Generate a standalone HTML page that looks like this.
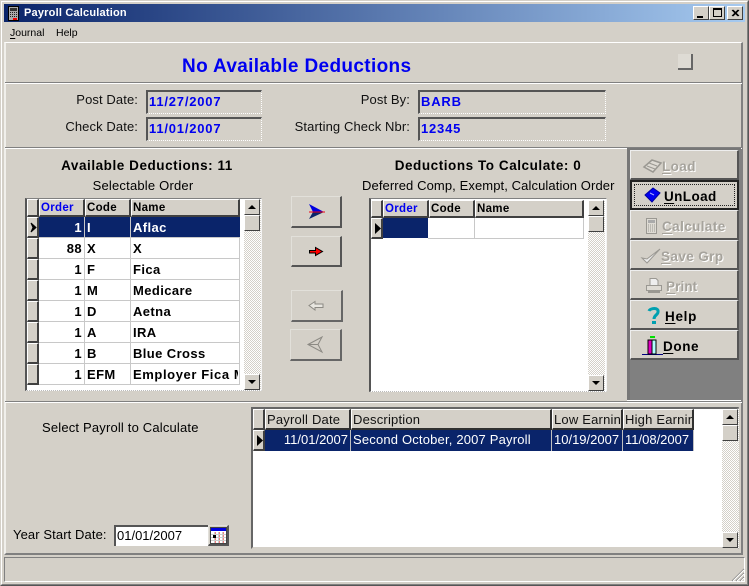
<!DOCTYPE html>
<html><head><meta charset="utf-8"><style>
html,body{margin:0;padding:0;width:749px;height:586px;overflow:hidden;background:#d4d0c8}
*{box-sizing:border-box}
body{font-family:"Liberation Sans",sans-serif;font-size:13px;color:#000;position:relative}
.a,.t{position:absolute}
.t{white-space:nowrap;line-height:14px}
.hl{position:absolute;height:2px;border-top:1px solid #808080;border-bottom:1px solid #fff}
.fld{position:absolute;border-top:2px solid #555;border-left:2px solid #555;border-right:1px dotted #fff;border-bottom:1px dotted #fff;color:#0000f0;font-weight:bold;font-size:13px;letter-spacing:.8px;padding:3px 0 0 1px;line-height:14px}
.lab{position:absolute;text-align:right;white-space:nowrap;line-height:14px;color:#111;letter-spacing:.1px}
.cap{position:absolute;text-align:center;white-space:nowrap;line-height:14px}
.c{position:absolute;overflow:hidden;white-space:nowrap;font-weight:bold;font-size:13px;letter-spacing:.4px;line-height:21px;padding:0 2px}
.h{position:absolute;overflow:hidden;white-space:nowrap;background:#d4d0c8;border-top:1px solid #fff;border-left:1px solid #fff;border-right:2px solid #404040;border-bottom:2px solid #404040;font-weight:bold;font-size:11.5px;padding:2px 0 0 1px;letter-spacing:.3px;line-height:13px}
.rb{position:absolute;background:#d4d0c8;border-top:1px solid #fff;border-left:1px solid #fff;border-right:2px solid #404040;border-bottom:2px solid #404040}
.btn{position:absolute;background:#d4d0c8;border-top:1px solid #e2e0da;border-left:1px solid #e2e0da;border-right:2px solid #555;border-bottom:2px solid #555}
.sb{position:absolute;width:17px;background:repeating-conic-gradient(#d4d0c8 0 25%,#fff 0 50%) 0 0/2px 2px}
.sbb{position:absolute;left:0;width:16px;height:16px;background:#d4d0c8;border-top:1px solid #fff;border-left:1px solid #fff;border-right:1px solid #404040;border-bottom:1px solid #404040}
.up:after,.dn:after{content:"";position:absolute;left:3px;width:0;height:0;border-left:4px solid transparent;border-right:4px solid transparent}
.up:after{top:5px;border-bottom:4px solid #000}
.dn:after{top:5px;border-top:4px solid #000}
.tb{position:absolute;left:0;width:109px;height:30px;background:#d4d0c8;border-top:1px solid #eee;border-left:1px solid #eee;border-right:2px solid #555;border-bottom:2px solid #555}
.tb .l{position:absolute;top:8px;font-weight:bold;font-size:13.5px;line-height:15px;letter-spacing:.4px;white-space:nowrap}
.tb .dis{color:#a6a39c;text-shadow:1px 1px 0 #fff}
.tb svg{position:absolute}
u{text-decoration:underline;text-underline-offset:2px}
.bc{position:absolute;overflow:hidden;white-space:nowrap;color:#fff;font-size:13px;line-height:20px;padding:0 2px;background:#0a246a;border-right:1px solid #c0c0c0;height:21px;top:430px}
.bh{position:absolute;overflow:hidden;white-space:nowrap;background:#d4d0c8;border-top:1px solid #fff;border-left:1px solid #fff;border-right:2px solid #303030;border-bottom:2px solid #303030;font-size:13px;letter-spacing:.2px;line-height:19px;padding-left:1px;top:409px;height:21px;color:#111}
</style></head><body>

<div class="a" style="left:0;top:0;width:749px;height:586px;border:1px solid #555;border-left-color:#d4d0c8;border-top-color:#d4d0c8"></div>
<div class="a" style="left:1px;top:1px;width:747px;height:584px;border:1px solid #fff;border-right-color:#808080;border-bottom-color:#808080"></div>

<!-- title bar -->
<div class="a" style="left:4px;top:4px;width:741px;height:18px;background:linear-gradient(90deg,#0a246a,#a6caf0)"></div>
<svg class="a" style="left:8px;top:6px" width="11" height="15" viewBox="0 0 11 15"><rect x=".5" y=".5" width="10" height="14" fill="#aaa" stroke="#000"/><rect x="2" y="2" width="7" height="3" fill="#333"/><path d="M2 6.500h7M2 8.500h7M2 10.500h7" stroke="#222" stroke-dasharray="1 1"/><rect x="5" y="12" width="4" height="2" fill="#e00"/></svg>
<div class="t" style="left:24px;top:6px;color:#fff;font-weight:bold;font-size:11px;letter-spacing:.2px">Payroll Calculation</div>
<div class="a" style="left:693px;top:6px;width:16px;height:14px;background:#d4d0c8;border:1px solid;border-color:#fff #404040 #404040 #fff"><div class="a" style="left:3px;top:9px;width:6px;height:2px;background:#000"></div></div>
<div class="a" style="left:709px;top:6px;width:16px;height:14px;background:#d4d0c8;border:1px solid;border-color:#fff #404040 #404040 #fff"><div class="a" style="left:3px;top:1px;width:9px;height:9px;border:1px solid #000;border-top-width:2px"></div></div>
<div class="a" style="left:727px;top:6px;width:16px;height:14px;background:#d4d0c8;border:1px solid;border-color:#fff #404040 #404040 #fff"><svg class="a" style="left:3px;top:2px" width="9" height="9"><path d="M1 1l6 6M2 1l6 6M7 1l-6 6M8 1l-6 6" stroke="#000" stroke-width="1"/></svg></div>

<!-- menu -->
<div class="t" style="left:10px;top:26px;font-size:10.5px"><u>J</u>ournal</div>
<div class="t" style="left:56px;top:26px;font-size:10.5px">Help</div>

<!-- frame -->
<div class="a" style="left:4px;top:42px;width:739px;height:513px;border-top:1px solid #fff;border-left:2px solid #f0efeb;border-right:2px solid #808080;border-bottom:2px solid #808080"></div>
<div class="hl" style="left:5px;top:82px;width:737px"></div>
<div class="hl" style="left:5px;top:147px;width:737px"></div>
<div class="hl" style="left:5px;top:401px;width:737px"></div>

<div class="t" style="left:182px;top:56px;color:#0000f0;font-weight:bold;font-size:19px;line-height:21px;letter-spacing:.35px">No Available Deductions</div>
<div class="a" style="left:678px;top:54px;width:15px;height:16px;border-right:2px solid #666;border-bottom:2px solid #666;background:#dedbd4"></div>

<div class="lab" style="right:611px;top:93px">Post Date:</div>
<div class="lab" style="right:611px;top:120px">Check Date:</div>
<div class="fld" style="left:146px;top:90px;width:116px;height:24px">11/27/2007</div>
<div class="fld" style="left:146px;top:117px;width:116px;height:24px">11/01/2007</div>
<div class="lab" style="right:339px;top:93px">Post By:</div>
<div class="lab" style="right:339px;top:120px">Starting Check Nbr:</div>
<div class="fld" style="left:418px;top:90px;width:188px;height:24px">BARB</div>
<div class="fld" style="left:418px;top:117px;width:188px;height:24px">12345</div>

<!-- left captions -->
<div class="cap" style="left:27px;width:240px;top:159px;font-weight:bold;font-size:13.5px;letter-spacing:.55px">Available Deductions: 11</div>
<div class="cap" style="left:43px;width:200px;top:179px;letter-spacing:.2px">Selectable Order</div>
<!-- left grid -->
<div class="a" style="left:25px;top:198px;width:237px;height:193px;background:#fff;border-top:1px solid #808080;border-left:2px solid #555;border-right:1px solid #f4f4f4;border-bottom:1px dotted #bbb"></div>
<div class="rb" style="left:27px;top:199px;width:12px;height:18px"></div>
<div class="h" style="left:39px;top:199px;width:46px;height:18px;color:#0000f0">Order</div>
<div class="h" style="left:85px;top:199px;width:46px;height:18px">Code</div>
<div class="h" style="left:131px;top:199px;width:109px;height:18px">Name</div>
<div class="a" style="left:39px;top:217px;width:201px;height:168px;background:repeating-linear-gradient(#fff 0 20px,#c8c8c8 20px 21px)"></div>
<div class="a" style="left:84px;top:217px;width:1px;height:168px;background:#c8c8c8"></div>
<div class="a" style="left:130px;top:217px;width:1px;height:168px;background:#c8c8c8"></div>
<div class="a" style="left:239px;top:217px;width:1px;height:168px;background:#c8c8c8"></div>
<div class="a" style="left:39px;top:217px;width:201px;height:20px;background:#0a246a"></div>
<div class="a" style="left:84px;top:217px;width:1px;height:20px;background:#c8c8c8"></div>
<div class="a" style="left:130px;top:217px;width:1px;height:20px;background:#c8c8c8"></div>

<div class="rb" style="left:27px;top:217px;width:12px;height:21px"><svg class="a" style="left:2px;top:4px" width="8" height="11"><path d="M1 1l5 4.500-5 4.500 2-4.500z" fill="#000" stroke="#000"/></svg></div>
<div class="rb" style="left:27px;top:238px;width:12px;height:21px"></div>
<div class="rb" style="left:27px;top:259px;width:12px;height:21px"></div>
<div class="rb" style="left:27px;top:280px;width:12px;height:21px"></div>
<div class="rb" style="left:27px;top:301px;width:12px;height:21px"></div>
<div class="rb" style="left:27px;top:322px;width:12px;height:21px"></div>
<div class="rb" style="left:27px;top:343px;width:12px;height:21px"></div>
<div class="rb" style="left:27px;top:364px;width:12px;height:21px"></div>

<div class="c" style="left:39px;top:217px;width:45px;text-align:right;color:#fff">1</div><div class="c" style="left:85px;top:217px;width:45px;color:#fff">I</div><div class="c" style="left:131px;top:217px;width:108px;color:#fff">Aflac</div>
<div class="c" style="left:39px;top:238px;width:45px;text-align:right">88</div><div class="c" style="left:85px;top:238px;width:45px">X</div><div class="c" style="left:131px;top:238px;width:108px">X</div>
<div class="c" style="left:39px;top:259px;width:45px;text-align:right">1</div><div class="c" style="left:85px;top:259px;width:45px">F</div><div class="c" style="left:131px;top:259px;width:108px">Fica</div>
<div class="c" style="left:39px;top:280px;width:45px;text-align:right">1</div><div class="c" style="left:85px;top:280px;width:45px">M</div><div class="c" style="left:131px;top:280px;width:108px">Medicare</div>
<div class="c" style="left:39px;top:301px;width:45px;text-align:right">1</div><div class="c" style="left:85px;top:301px;width:45px">D</div><div class="c" style="left:131px;top:301px;width:108px">Aetna</div>
<div class="c" style="left:39px;top:322px;width:45px;text-align:right">1</div><div class="c" style="left:85px;top:322px;width:45px">A</div><div class="c" style="left:131px;top:322px;width:108px">IRA</div>
<div class="c" style="left:39px;top:343px;width:45px;text-align:right">1</div><div class="c" style="left:85px;top:343px;width:45px">B</div><div class="c" style="left:131px;top:343px;width:108px">Blue Cross</div>
<div class="c" style="left:39px;top:364px;width:45px;text-align:right">1</div><div class="c" style="left:85px;top:364px;width:45px">EFM</div><div class="c" style="left:131px;top:364px;width:107px;letter-spacing:.6px">Employer Fica Match</div>

<div class="sb" style="left:244px;top:199px;height:191px"><div class="sbb up" style="top:0"></div><div class="sbb" style="top:16px"></div><div class="sbb dn" style="bottom:0"></div></div>

<!-- arrow buttons -->
<div class="btn" style="left:291px;top:196px;width:51px;height:32px"><svg class="a" style="left:15px;top:6px" width="20" height="18"><path d="M2 1l15 8H6z" fill="#0000e0"/><path d="M6 9h11L2 16z" fill="#0a246a"/><path d="M2 9h16" stroke="#f00012" stroke-width="1"/></svg></div>
<div class="btn" style="left:291px;top:236px;width:51px;height:31px"><svg class="a" style="left:16px;top:8px" width="18" height="14"><path d="M1.500 5.500h6V2.500l7 4-7 4V8h-6z" fill="#f00" stroke="#000"/></svg></div>
<div class="btn" style="left:291px;top:290px;width:52px;height:32px;border-right-color:#666;border-bottom-color:#666"><svg class="a" style="left:15px;top:9px" width="20" height="14"><path d="M2 5.500l6-4v2.500h8v3.500H8V10z" fill="#e8e6e0" stroke="#8c8a84"/></svg></div>
<div class="btn" style="left:290px;top:329px;width:52px;height:32px;border-right-color:#666;border-bottom-color:#666"><svg class="a" style="left:15px;top:6px" width="20" height="18"><path d="M2 8.500L16 1l-4 7.500 4 7.500z" fill="none" stroke="#8c8a84"/><path d="M2 8.500h10" stroke="#8c8a84"/></svg></div>

<!-- right captions -->
<div class="cap" style="left:368px;width:240px;top:159px;font-weight:bold;font-size:13.5px;letter-spacing:.55px">Deductions To Calculate: 0</div>
<div class="cap" style="left:362px;top:179px;letter-spacing:.1px">Deferred Comp, Exempt, Calculation Order</div>
<!-- right grid -->
<div class="a" style="left:369px;top:198px;width:238px;height:194px;background:#fff;border-top:1px solid #808080;border-left:2px solid #555;border-right:1px solid #f4f4f4;border-bottom:1px dotted #bbb"></div>
<div class="rb" style="left:371px;top:200px;width:12px;height:18px"></div>
<div class="h" style="left:383px;top:200px;width:46px;height:18px;color:#0000f0">Order</div>
<div class="h" style="left:429px;top:200px;width:46px;height:18px">Code</div>
<div class="h" style="left:475px;top:200px;width:109px;height:18px">Name</div>
<div class="rb" style="left:371px;top:218px;width:12px;height:21px"><svg class="a" style="left:2px;top:3px" width="8" height="13"><path d="M1 1l6 5.500-6 5.500z" fill="#000"/></svg></div>
<div class="a" style="left:383px;top:218px;width:45px;height:20px;background:#0a246a"></div>
<div class="a" style="left:428px;top:238px;width:156px;height:1px;background:#c8c8c8"></div>
<div class="a" style="left:474px;top:218px;width:1px;height:21px;background:#c8c8c8"></div>
<div class="a" style="left:583px;top:218px;width:1px;height:21px;background:#c8c8c8"></div>
<div class="sb" style="left:588px;top:200px;height:191px"><div class="sbb up" style="top:0"></div><div class="sbb" style="top:16px"></div><div class="sbb dn" style="bottom:0"></div></div>

<!-- toolbar -->
<div class="a" style="left:627px;top:148px;width:114px;height:252px;background:#808080;border-left:3px solid #777;border-top:2px solid #777"></div>
<div class="a" style="left:630px;top:150px;width:0;height:0">
 <div class="tb" style="top:0"><svg style="left:11px;top:7px" width="22" height="16"><path d="M2 9l8-7 9 3-8 9z" fill="#dedbd4" stroke="#9a9892" stroke-width="1.500"/><path d="M7 5l8 3M5 8l8 3" stroke="#9a9892"/></svg><span class="l dis" style="left:31px"><u>L</u>oad</span></div>
 <div class="tb" style="top:30px;border:2px solid #222;border-top-width:2px"><div class="a" style="left:2px;top:2px;width:101px;height:22px;border:1px dotted #222"></div><svg style="left:11px;top:4px" width="20" height="18"><path d="M2 9l8-7 7 5-8 9z" fill="#0000f0" stroke="#0000a0"/><path d="M7 7l4 2" stroke="#aaf"/></svg><span class="l" style="left:32px;top:7px"><u>U</u>nLoad</span></div>
 <div class="tb" style="top:60px"><svg style="left:14px;top:6px" width="14" height="18"><rect x="1.500" y="1.500" width="10" height="15" fill="#dedbd4" stroke="#9a9892"/><rect x="3" y="3" width="7" height="3" fill="#aaa"/><path d="M3 8h7M3 10h7M3 12h7M3 14h7" stroke="#9a9892" stroke-dasharray="1 1"/></svg><span class="l dis" style="left:31px"><u>C</u>alculate</span></div>
 <div class="tb" style="top:90px"><svg style="left:9px;top:6px" width="22" height="18"><path d="M2 11l5 5L20 2 7 12z" fill="#eee" stroke="#9a9892"/></svg><span class="l dis" style="left:30px"><u>S</u>ave Grp</span></div>
 <div class="tb" style="top:120px"><svg style="left:14px;top:6px" width="18" height="17"><path d="M5 1.500h6l2 2v5H5z" fill="#eee" stroke="#9a9892"/><path d="M1.500 8.500h15v5h-15z" fill="#dedbd4" stroke="#9a9892"/><path d="M3 14h12v2H3z" fill="#9a9892"/></svg><span class="l dis" style="left:35px;letter-spacing:.1px"><u>P</u>rint</span></div>
 <div class="tb" style="top:150px"><svg style="left:15px;top:5px" width="16" height="20"><path d="M3 5c1-3 10-4 9 1 0 3-4 3-4 7" fill="none" stroke="#00a0b0" stroke-width="3"/><path d="M6 15h4v3H6z" fill="#00a0b0"/></svg><span class="l" style="left:34px;letter-spacing:.7px"><u>H</u>elp</span></div>
 <div class="tb" style="top:180px"><svg style="left:11px;top:4px" width="22" height="21"><path d="M0 19.500h21" stroke="#000080"/><rect x="8" y="1" width="5" height="2" fill="#00e000"/><rect x="6" y="5" width="4" height="14" fill="#e000c0" stroke="#000"/><rect x="10" y="5" width="4" height="14" fill="#b0ffff" stroke="#000"/></svg><span class="l" style="left:32px;letter-spacing:.6px"><u>D</u>one</span></div>
</div>
<div class="a" style="left:627px;top:400px;width:114px;height:1px;background:#fff"></div>

<!-- bottom -->
<div class="t" style="left:42px;top:421px;letter-spacing:.18px">Select Payroll to Calculate</div>
<div class="t" style="left:13px;top:528px;letter-spacing:.1px">Year Start Date:</div>
<div class="a" style="left:114px;top:525px;width:94px;height:21px;background:#fff;border-top:2px solid #555;border-left:2px solid #555;font-size:13px;line-height:18px;padding-left:1px">01/01/2007</div>
<div class="btn" style="left:208px;top:525px;width:21px;height:21px"><svg class="a" style="left:1px;top:1px" width="17" height="17"><rect x=".5" y=".5" width="16" height="16" fill="#fff" stroke="#444"/><rect x="1" y="1" width="15" height="3" fill="#0000e0"/><path d="M5 6h1M9 6h1M13 6h1M9 9h1M13 9h1M5 12h1M9 12h1M13 12h1M5 15h1M9 15h1M13 15h1" stroke="#e00" stroke-width="1"/><path d="M4.500 5v11M8.500 5v11M12.500 5v11M1 7.500h15M1 10.500h15M1 13.500h15" stroke="#ccc" stroke-width="1"/><rect x="3" y="8" width="3" height="3" fill="#000"/></svg></div>

<div class="a" style="left:251px;top:407px;width:488px;height:142px;background:#fff;border-top:2px solid #666;border-left:2px solid #666;border-right:2px solid #999;border-bottom:2px solid #d4d0c8"></div>
<div class="rb" style="left:253px;top:409px;width:12px;height:21px"></div>
<div class="bh" style="left:265px;width:86px">Payroll Date</div>
<div class="bh" style="left:351px;width:201px">Description</div>
<div class="bh" style="left:552px;width:71px">Low Earnings</div>
<div class="bh" style="left:623px;width:71px">High Earnings</div>
<div class="rb" style="left:253px;top:430px;width:12px;height:21px"><svg class="a" style="left:2px;top:3px" width="8" height="13"><path d="M1 1l6 5.500-6 5.500z" fill="#000"/></svg></div>
<div class="bc" style="left:265px;width:86px;text-align:right">11/01/2007</div>
<div class="bc" style="left:351px;width:201px;letter-spacing:.18px">Second October, 2007 Payroll</div>
<div class="bc" style="left:552px;width:71px">10/19/2007</div>
<div class="bc" style="left:623px;width:71px">11/08/2007</div>
<div class="sb" style="left:722px;top:409px;height:139px"><div class="sbb up" style="top:0"></div><div class="sbb" style="top:16px"></div><div class="sbb dn" style="bottom:0"></div></div>

<!-- status -->
<div class="a" style="left:4px;top:557px;width:741px;height:25px;border-top:1px solid #808080;border-left:1px solid #808080;border-right:1px solid #fff;border-bottom:1px solid #fff"></div>
<svg class="a" style="left:731px;top:568px" width="14" height="14"><path d="M13 1L1 13M13 5L5 13M13 9L9 13" stroke="#808080"/><path d="M13 2L2 13M13 6L6 13M13 10L10 13" stroke="#fff"/></svg>
</body></html>
